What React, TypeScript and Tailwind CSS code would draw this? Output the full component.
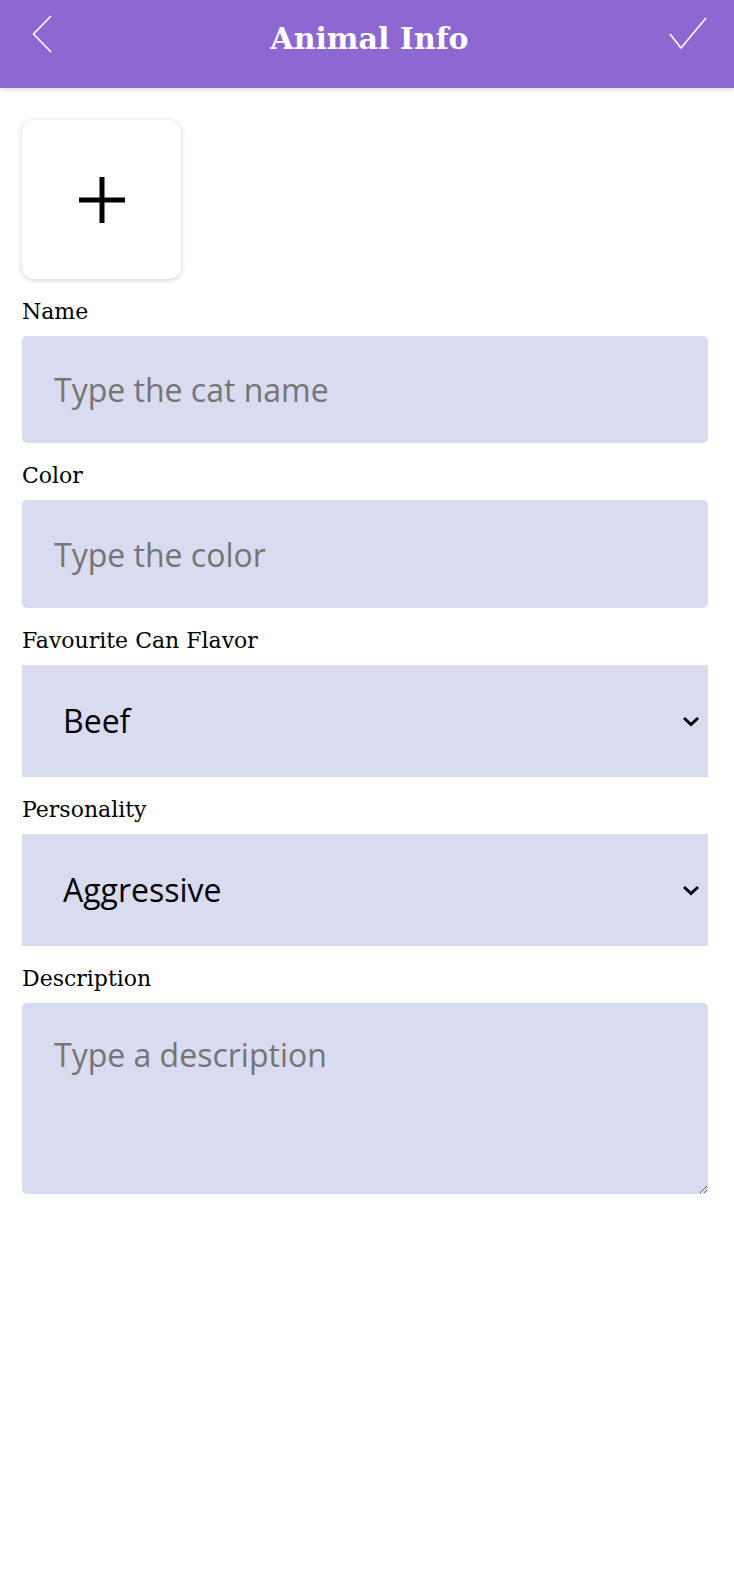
import React from "react";

const labelCls =
  "block pt-[19px] pb-[10px] leading-[28px] text-[22px] text-black [font-family:'DejaVu_Serif',serif]";
const fieldFont = "[font-family:'Open_Sans',sans-serif]";

function Chevron() {
  return (
    <svg
      className="pointer-events-none absolute right-[8px] top-1/2 -translate-y-1/2"
      width="18"
      height="12"
      viewBox="0 0 18 12"
    >
      <polyline points="2,3 9,9.5 16,3" fill="none" stroke="#000" strokeWidth="3" />
    </svg>
  );
}

export default function App() {
  return (
    <div className="min-h-[1596px] w-full bg-white">
      <header className="grid h-[88px] grid-cols-[1fr_auto_1fr] items-start bg-[#8e67d3] pl-[32px] pr-[27px] shadow-[0_2px_5px_rgba(0,0,0,0.12)]">
        <div className="pt-[15px]">
          <svg width="20" height="38" viewBox="0 0 20 38">
            <polyline points="19,1 1.5,19 19,37" fill="none" stroke="#fff" strokeWidth="1.6" />
          </svg>
        </div>
        <h1 className="pt-[19px] text-[30px] font-bold leading-[40px] text-white [font-family:'DejaVu_Serif',serif]">
          Animal Info
        </h1>
        <div className="flex justify-end pt-[17px]">
          <svg width="38" height="32" viewBox="0 0 38 32">
            <polyline points="1,17 12,31 37,1" fill="none" stroke="#fff" strokeWidth="1.6" />
          </svg>
        </div>
      </header>

      <main className="pl-[22px] pr-[26px]">
        <button className="mt-[32px] flex h-[159px] w-[159px] items-center justify-center rounded-[12px] bg-white shadow-[0_1px_5px_rgba(0,0,0,0.2)]">
          <svg width="46" height="46" viewBox="0 0 46 46">
            <line x1="23" y1="0" x2="23" y2="46" stroke="#000" strokeWidth="5" />
            <line x1="0" y1="23" x2="46" y2="23" stroke="#000" strokeWidth="5" />
          </svg>
        </button>

        <label className={labelCls}>Name</label>
        <input
          placeholder="Type the cat name"
          className={`block h-[107px] w-full rounded-[5px] bg-[#d9dbf0] px-[32px] text-[32px] text-black placeholder:text-[#757575] outline-none ${fieldFont}`}
        />

        <label className={labelCls}>Color</label>
        <input
          placeholder="Type the color"
          className={`block h-[108px] w-full rounded-[5px] bg-[#d9dbf0] px-[32px] text-[32px] text-black placeholder:text-[#757575] outline-none ${fieldFont}`}
        />

        <label className={labelCls}>Favourite Can Flavor</label>
        <div className="relative">
          <select
            defaultValue="Beef"
            className={`block h-[112px] w-full appearance-none rounded-none bg-[#d9dbf0] pl-[41px] text-[32px] text-black outline-none ${fieldFont}`}
          >
            <option>Beef</option>
            <option>Chicken</option>
            <option>Fish</option>
          </select>
          <Chevron />
        </div>

        <label className={labelCls}>Personality</label>
        <div className="relative">
          <select
            defaultValue="Aggressive"
            className={`block h-[112px] w-full appearance-none rounded-none bg-[#d9dbf0] pl-[41px] text-[32px] text-black outline-none ${fieldFont}`}
          >
            <option>Aggressive</option>
            <option>Calm</option>
            <option>Playful</option>
          </select>
          <Chevron />
        </div>

        <label className={labelCls}>Description</label>
        <textarea
          placeholder="Type a description"
          className={`block h-[191px] w-full rounded-[5px] bg-[#d9dbf0] px-[32px] pt-[30px] text-[32px] leading-[44px] text-black placeholder:text-[#757575] outline-none ${fieldFont}`}
        />
      </main>
    </div>
  );
}
